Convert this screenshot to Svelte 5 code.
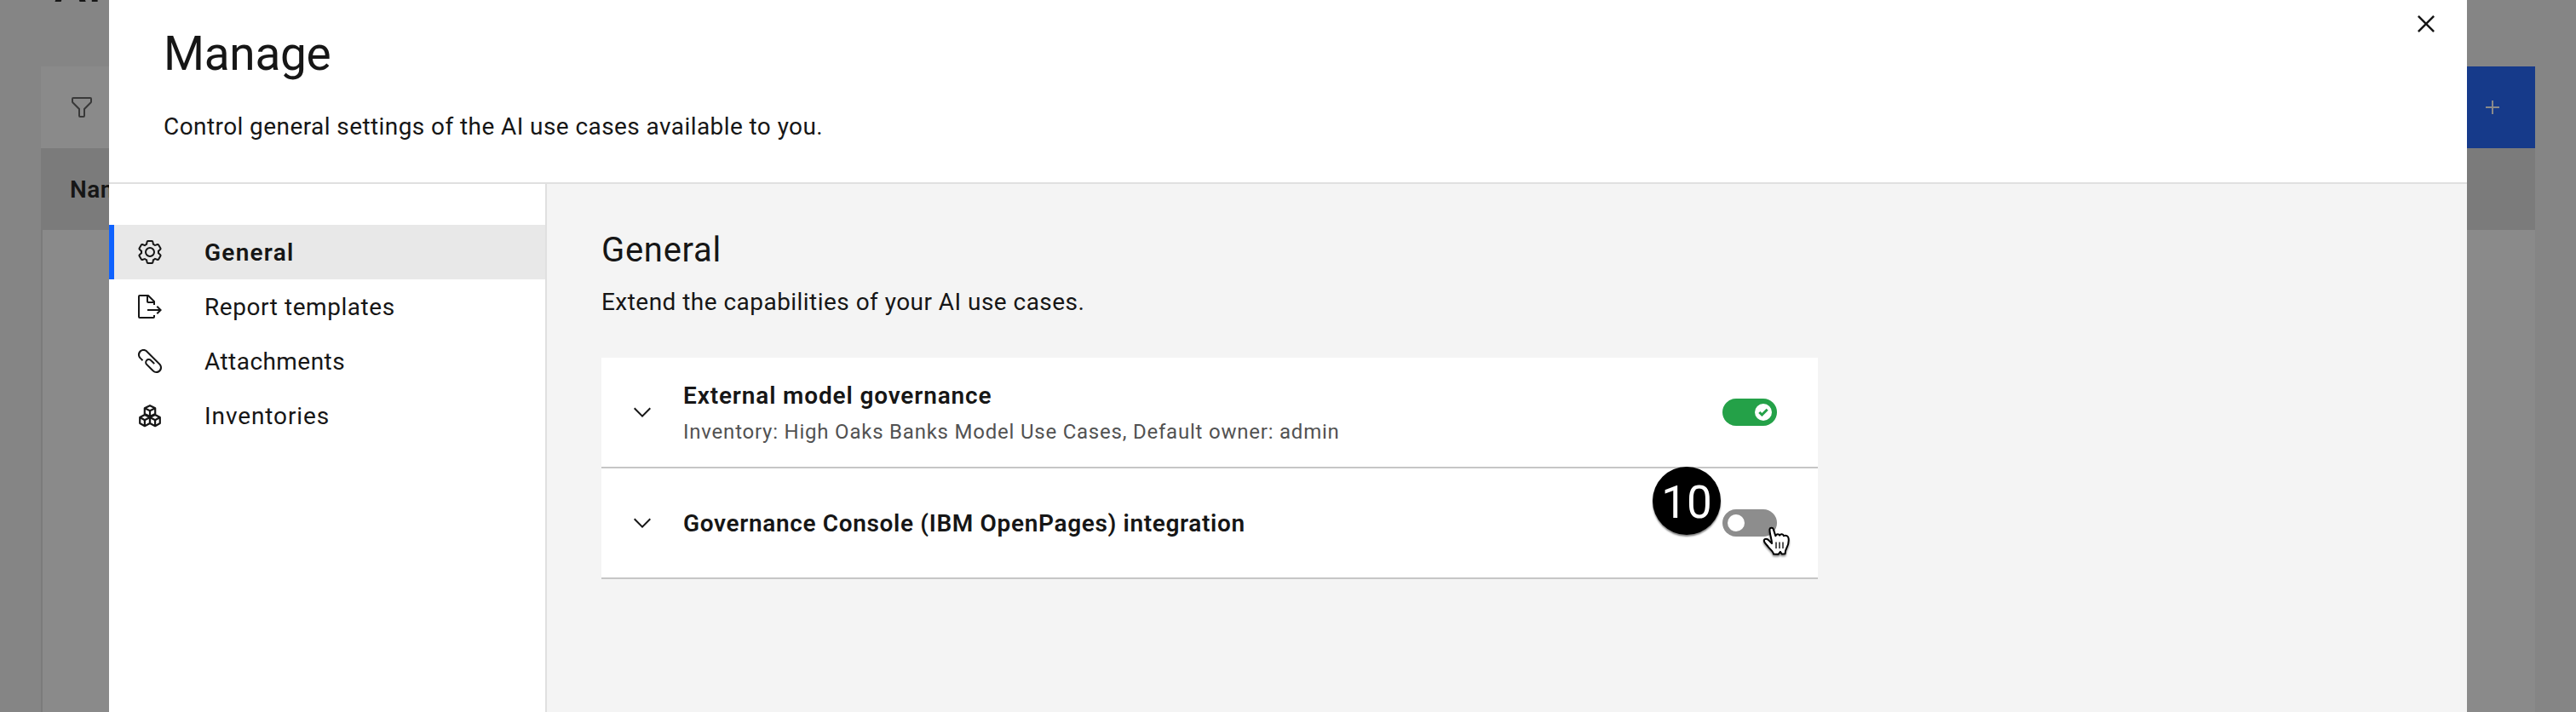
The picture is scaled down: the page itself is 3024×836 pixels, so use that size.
<script>
  const nav = [
    { label: 'General', icon: 'gear', active: true, ls: 1.25 },
    { label: 'Report templates', icon: 'export', ls: 0.55 },
    { label: 'Attachments', icon: 'clip', ls: 0.45 },
    { label: 'Inventories', icon: 'cubes', ls: 0.9 }
  ];
</script>

<div class="page">
  <div class="behind">
    <h1 class="behind-title">AI use cases</h1>
    <div class="toolbar">
      <svg class="filter" viewBox="0 0 32 32"><path fill="currentColor" d="M18,28H14a2,2,0,0,1-2-2V18.41L4.59,11A2,2,0,0,1,4,9.59V6A2,2,0,0,1,6,4H26a2,2,0,0,1,2,2V9.59A2,2,0,0,1,27.41,11L20,18.41V26A2,2,0,0,1,18,28ZM6,6V9.59l8,8V26h4V17.59l8-8V6Z" /></svg>
      <div class="create"><svg viewBox="0 0 32 32"><path fill="currentColor" d="M17 15V8h-2v7H8v2h7v7h2v-7h7v-2z" /></svg></div>
    </div>
    <div class="thead">Name</div>
    <div class="tbody"></div>
  </div>

  <div class="modal">
    <header>
      <h2>Manage</h2>
      <p>Control general settings of the AI use cases available to you.</p>
      <button class="close" aria-label="Close"><svg viewBox="0 0 32 32"><path fill="currentColor" d="M17.4141 16L24 9.4141 22.5859 8 16 14.5859 9.4143 8 8 9.4141 14.5859 16 8 22.5859 9.4143 24 16 17.4141 22.5859 24 24 22.5859z" /></svg></button>
    </header>
    <div class="body">
      <nav>
        {#each nav as item}
          <div class="item" class:active={item.active}>
            <svg viewBox="0 0 32 32" fill="currentColor">
              {#if item.icon === 'gear'}
                <path d="M27,16.76c0-.25,0-.5,0-.76s0-.51,0-.77l1.92-1.68A2,2,0,0,0,29.3,11L26.94,7a2,2,0,0,0-1.73-1,2,2,0,0,0-.64.1l-2.43.82a11.35,11.35,0,0,0-1.31-.75l-.51-2.52a2,2,0,0,0-2-1.61H13.64a2,2,0,0,0-2,1.61l-.51,2.52a11.48,11.48,0,0,0-1.32.75L7.43,6.06A2,2,0,0,0,6.79,6,2,2,0,0,0,5.06,7L2.7,11a2,2,0,0,0,.41,2.51L5,15.24c0,.25,0,.5,0,.76s0,.51,0,.77L3.11,18.45A2,2,0,0,0,2.7,21L5.06,25a2,2,0,0,0,1.73,1,2,2,0,0,0,.64-.1l2.43-.82a11.35,11.35,0,0,0,1.31.75l.51,2.52a2,2,0,0,0,2,1.61h4.72a2,2,0,0,0,2-1.61l.51-2.52a11.48,11.48,0,0,0,1.32-.75l2.42.82a2,2,0,0,0,.64.1,2,2,0,0,0,1.73-1L29.3,21a2,2,0,0,0-.41-2.51ZM25.21,24l-3.43-1.16a8.86,8.86,0,0,1-2.71,1.57L18.36,28H13.64l-.71-3.55a9.36,9.36,0,0,1-2.7-1.57L6.79,24,4.43,20l2.72-2.4a8.9,8.9,0,0,1,0-3.13L4.43,12,6.79,8l3.43,1.16a8.86,8.86,0,0,1,2.71-1.57L13.64,4h4.72l.71,3.55a9.36,9.36,0,0,1,2.7,1.57L25.21,8,27.57,12l-2.72,2.4a8.9,8.9,0,0,1,0,3.13L27.57,20Z" />
                <path d="M16,22a6,6,0,1,1,6-6A5.94,5.94,0,0,1,16,22Zm0-10a3.91,3.91,0,0,0-4,4,3.91,3.91,0,0,0,4,4,3.91,3.91,0,0,0,4-4A3.91,3.91,0,0,0,16,12Z" />
              {:else if item.icon === 'export'}
                <path d="M13 21 26.17 21 23.59 23.59 25 25 30 20 25 15 23.59 16.41 26.17 19 13 19z" />
                <path d="M22,14V10a1,1,0,0,0-.29-.71l-7-7A1,1,0,0,0,14,2H4A2,2,0,0,0,2,4V28a2,2,0,0,0,2,2H20a2,2,0,0,0,2-2V26H20v2H4V4h8v6a2,2,0,0,0,2,2h6v2Zm-8-4V4.41L19.59,10Z" />
              {:else if item.icon === 'clip'}
                <path d="M28.1,18.9L13.1,3.9c-2.5-2.6-6.6-2.6-9.2-0.1S1.3,10.5,3.9,13c0,0,0.1,0.1,0.1,0.1L6.8,16l1.4-1.4l-2.9-2.9C3.6,10,3.6,7.1,5.3,5.4s4.6-1.8,6.3-0.1c0,0,0,0,0.1,0.1l14.9,14.9c1.8,1.7,1.8,4.6,0.1,6.3c-1.7,1.8-4.6,1.8-6.3,0.1c0,0,0,0-0.1-0.1l-7.4-7.4c-1-1-0.9-2.6,0-3.5c1-0.9,2.5-0.9,3.5,0l4.1,4.1l1.4-1.4c0,0-4.2-4.2-4.2-4.2c-1.8-1.7-4.6-1.6-6.3,0.2c-1.6,1.7-1.6,4.4,0,6.2l7.5,7.5c2.5,2.6,6.6,2.6,9.2,0.1S30.700,21.500,28.100,18.900C28.100,19,28.100,18.900,28.100,18.900L28.100,18.900z" />
              {:else}
                <g fill="none" stroke="currentColor" stroke-width="2.200" stroke-linejoin="round">
                  <path d="M16 4.200 22.200 7.200V13.900L16 17 9.800 13.900V7.200ZM9.800 7.200 16 10.300 22.200 7.200M16 10.300V17" />
                  <path d="M9.900 15 16 18V25L9.900 28.200 4.200 25V18ZM4.200 18 9.900 21.300 16 18M9.900 21.300V28.200" />
                  <path d="M22.100 15 27.800 18V25L22.100 28.200 16 25V18ZM16 18 22.100 21.300 27.800 18M22.100 21.300V28.200" />
                </g>
              {/if}
            </svg>
            <span style:letter-spacing="{item.ls}px">{item.label}</span>
          </div>
        {/each}
      </nav>
      <main>
        <h3>General</h3>
        <p>Extend the capabilities of your AI use cases.</p>
        <section class="card">
          <svg class="chev" viewBox="0 0 32 32"><path fill="currentColor" d="M16 22L6 12 7.400 10.600 16 19.200 24.600 10.600 26 12z" /></svg>
          <div class="text">
            <strong class="t1">External model governance</strong>
            <small>Inventory: High Oaks Banks Model Use Cases, Default owner: admin</small>
          </div>
          <div class="toggle on"><i><svg viewBox="0 0 12 10"><path d="M1.300 5 4.400 8 10.700 1.800" fill="none" stroke="#24a148" stroke-width="3" /></svg></i></div>
        </section>
        <section class="card">
          <svg class="chev" viewBox="0 0 32 32"><path fill="currentColor" d="M16 22L6 12 7.400 10.600 16 19.200 24.600 10.600 26 12z" /></svg>
          <div class="text"><strong class="t2">Governance Console (IBM OpenPages) integration</strong></div>
          <div class="toggle">
            <i></i>
            <b class="step">10</b>
            <svg class="hand" viewBox="0 0 34 38">
              <path d="M8.500 3.200C8.900 1.500 12 1 12.800 3.400L15.300 11.300C16.300 8.800 19.200 8.800 20.100 10.600 21.400 8.500 24.300 8.900 24.900 11.200 27.300 9.800 30.500 11.500 30.600 14.300 31 18 30.200 22.300 28.300 25.600 27 28 26.500 29.300 26.600 32.200L22.800 32.600 20.900 29.800 18.600 32.800 13 32.600C12.800 29.700 9.500 27.500 7 24.300 5 21.500 1.600 19.200 1.800 16.500 2.300 14 5.600 14 7.600 16.600L11 20.100C11.300 16 8 8 8.500 3.200Z" fill="#fff" stroke="#000" stroke-width="2" stroke-linejoin="round" />
              <path d="M16 18.500V26M20 18.500V26M24 18.500V26" stroke="#000" stroke-width="1.300" fill="none" />
            </svg>
          </div>
        </section>
      </main>
    </div>
  </div>
</div>

<style>
  :global(body) { margin: 0; }
  .page { position: relative; width: 3024px; height: 836px; overflow: hidden; background: #858585; color: #161616; font-family: Roboto, "Liberation Sans", sans-serif; font-size: 28px; line-height: 40px; }
  h1, h2, h3, p { margin: 0; font-weight: 400; }
  svg { display: block; flex: none; }
  .behind { box-sizing: border-box; height: 836px; padding: 0 48px; display: flex; flex-direction: column; }
  .behind-title { box-sizing: border-box; flex: none; height: 127px; margin: -49px 0 0 16px; font-size: 56px; line-height: 64px; font-weight: 500; letter-spacing: 2px; }
  .toolbar { height: 96px; flex: none; background: #8a8a8a; display: flex; align-items: center; justify-content: space-between; padding-left: 32px; }
  .filter { width: 32px; height: 32px; color: #393939; }
  .create { box-sizing: border-box; width: 360px; height: 96px; padding-right: 34px; background: #163a8a; color: #8a8a8a; display: flex; align-items: center; justify-content: flex-end; }
  .create svg { width: 32px; height: 32px; }
  .thead { box-sizing: border-box; height: 96px; flex: none; line-height: 96px; padding: 1px 0 0 34px; background: #7b7b7b; font-weight: 600; letter-spacing: 0.5px; }
  .tbody { flex: 1; background: #8a8a8a; border-left: 2px solid #7b7b7b; }
  .modal { position: absolute; left: 128px; top: 0; width: 2768px; height: 836px; background: #fff; display: flex; flex-direction: column; }
  header { position: relative; box-sizing: border-box; height: 216px; flex: none; border-bottom: 2px solid #e0e0e0; padding: 27px 64px 0; }
  h2 { font-size: 55px; line-height: 72px; letter-spacing: -0.3px; }
  header p { margin-top: 30px; letter-spacing: 0.42px; }
  .close { position: absolute; right: 28px; top: 8px; border: 0; padding: 0; background: none; color: #161616; }
  .close svg { width: 40px; height: 40px; }
  .body { flex: 1; display: flex; min-height: 0; }
  nav { width: 512px; flex: none; padding-top: 48px; border-right: 2px solid #e0e0e0; }
  .item { box-sizing: border-box; height: 64px; display: flex; align-items: center; gap: 48px; padding-left: 32px; }
  .item span { padding-top: 2px; }
  .item svg { width: 32px; height: 32px; }
  .active { background: #e8e8e8; border-left: 6px solid #0f62fe; padding-left: 26px; font-weight: 600; }
  main { flex: 1; background: #f4f4f4; padding: 50px 64px 0; }
  h3 { font-size: 40px; line-height: 56px; letter-spacing: 0.7px; }
  main p { margin: 13px 0 45px; letter-spacing: 0.46px; }
  .card { box-sizing: border-box; width: 1428px; height: 130px; padding: 0 48px 0 32px; display: flex; align-items: center; background: #fff; border-bottom: 2px solid #c6c6c6; }
  .chev { width: 32px; height: 32px; }
  .text { flex: 1; padding: 2px 0 0 32px; display: flex; flex-direction: column; }
  .text strong { font-weight: 600; line-height: 44px; }
  .t1 { letter-spacing: 0.85px; }
  .t2 { letter-spacing: 0.65px; }
  small { font-size: 24px; line-height: 40px; color: #525252; letter-spacing: 0.78px; }
  .toggle { position: relative; box-sizing: border-box; width: 64px; height: 32px; padding: 6px; border-radius: 16px; background: #8d8d8d; display: flex; }
  .toggle i { width: 20px; height: 20px; border-radius: 50%; background: #fff; display: grid; place-items: center; }
  .toggle i svg { width: 12px; height: 10px; }
  .on { background: #24a148; justify-content: flex-end; }
  .step { position: absolute; left: -82px; top: -50px; width: 80px; height: 80px; border-radius: 50%; background: #000; color: #fff; font: 400 53px/84px Roboto, sans-serif; text-align: center; box-shadow: 0 2px 2px rgba(0, 0, 0, 0.5); }
  .hand { position: absolute; left: 47px; top: 20px; width: 34px; height: 38px; filter: drop-shadow(0 2px 1px rgba(0, 0, 0, 0.45)); }
</style>
